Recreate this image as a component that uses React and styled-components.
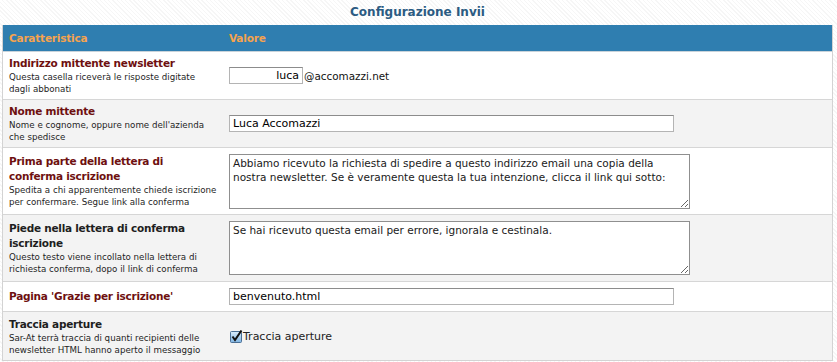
import React from 'react';
import styled, { createGlobalStyle } from 'styled-components';

const GlobalStyle = createGlobalStyle`
  html, body {
    margin: 0;
    padding: 0;
  }
  body {
    width: 837px;
    height: 362px;
    overflow: hidden;
    font-family: "DejaVu Sans", Verdana, sans-serif;
    background-color: #fdfdfd;
    background-image: repeating-linear-gradient(
      45deg,
      #ffffff 0px,
      #ffffff 2px,
      #f6f6f6 2px,
      #f6f6f6 3px
    );
  }
`;

const Page = styled.div`
  padding: 5px 4px 0 2px;
`;

const Title = styled.h1`
  margin: 0 0 6px;
  height: 14px;
  text-align: center;
  font-size: 12px;
  font-weight: bold;
  line-height: 14px;
  color: #2b5b82;
`;

const Table = styled.div`
  display: grid;
  grid-template-columns: 220px 1fr;
  width: 831px;
  border: 1px solid #d3d3d3;
  border-top: none;
  box-sizing: border-box;
`;

const Head = styled.div`
  background: #2f7eb0;
  height: 26px;
  padding: 0 6px;
  display: flex;
  align-items: center;
  font-size: 10.5px;
  letter-spacing: -0.2px;
  font-weight: bold;
  color: #f6a34e;
  border-bottom: 1px solid #c9d3da;
`;

const Cell = styled.div`
  background: ${p => (p.$alt ? '#f3f3f3' : '#ffffff')};
  height: ${p => p.$h}px;
  padding: 0 6px;
  display: flex;
  flex-direction: column;
  justify-content: center;
  border-bottom: ${p => (p.$last ? 'none' : '1px solid #d6d6d6')};
  box-sizing: border-box;
`;

const ValueCell = styled(Cell)`
  flex-direction: row;
  align-items: center;
  justify-content: flex-start;
`;

const Label = styled.div`
  font-size: 10.5px;
  letter-spacing: -0.25px;
  font-weight: bold;
  line-height: 15px;
  color: ${p => (p.$dark ? '#1e1e1e' : '#6e1010')};
`;

const Hint = styled.div`
  font-size: 8.7px;
  line-height: 12px;
  color: #1e1e1e;
`;

const TextInput = styled.input`
  width: ${p => p.$w}px;
  height: 17px;
  box-sizing: border-box;
  border: 1px solid #b4b4b4;
  border-top-color: #8c8c8c;
  padding: 0 3px;
  font-family: "DejaVu Sans", Verdana, sans-serif;
  font-size: 11px;
  color: #000;
  text-align: ${p => p.$align || 'left'};
  background: #fff;
  margin: 0;
`;

const Area = styled.textarea`
  width: 461px;
  height: ${p => p.$h}px;
  box-sizing: border-box;
  border: 1px solid #8f8f8f;
  padding: 1px 3px;
  font-family: "DejaVu Sans", Verdana, sans-serif;
  font-size: 10.5px;
  line-height: 14px;
  color: #1a1a1a;
  margin: 0;
`;

const Suffix = styled.span`
  font-size: 10.4px;
  margin-left: 1px;
  color: #111;
`;

const CheckLabel = styled.label`
  display: flex;
  align-items: center;
  font-size: 11px;
  color: #222;
  gap: 1px;
`;

const CheckBox = styled.span`
  display: inline-block;
  width: 12px;
  height: 12px;
  margin-left: 1px;
`;

const CheckIcon = () => (
  <CheckBox>
    <svg width="13" height="13" viewBox="0 0 13 13">
      <defs>
        <linearGradient id="cb" x1="0" y1="0" x2="0" y2="1">
          <stop offset="0" stopColor="#d9ecfb" />
          <stop offset="1" stopColor="#7fb4e2" />
        </linearGradient>
      </defs>
      <rect x="0.5" y="1.5" width="11" height="11" rx="1" fill="url(#cb)" stroke="#4a6f95" />
      <path d="M2.5 6.5 L5 10 L11.5 0.5" fill="none" stroke="#111" strokeWidth="2" />
    </svg>
  </CheckBox>
);

const App = () => (
  <Page>
    <GlobalStyle />
    <Title>Configurazione Invii</Title>
    <Table>
      <Head>Caratteristica</Head>
      <Head>Valore</Head>

      <Cell $h={48}>
        <Label>Indirizzo mittente newsletter</Label>
        <Hint>Questa casella riceverà le risposte digitate<br />dagli abbonati</Hint>
      </Cell>
      <ValueCell $h={48}>
        <TextInput $w={74} $align="right" defaultValue="luca" />
        <Suffix>@accomazzi.net</Suffix>
      </ValueCell>

      <Cell $h={48} $alt>
        <Label>Nome mittente</Label>
        <Hint>Nome e cognome, oppure nome dell'azienda<br />che spedisce</Hint>
      </Cell>
      <ValueCell $h={48} $alt>
        <TextInput $w={445} defaultValue="Luca Accomazzi" />
      </ValueCell>

      <Cell $h={67}>
        <Label>Prima parte della lettera di<br />conferma iscrizione</Label>
        <Hint>Spedita a chi apparentemente chiede iscrizione<br />per confermare. Segue link alla conferma</Hint>
      </Cell>
      <ValueCell $h={67}>
        <Area
          $h={55}
          defaultValue="Abbiamo ricevuto la richiesta di spedire a questo indirizzo email una copia della nostra newsletter. Se è veramente questa la tua intenzione, clicca il link qui sotto:"
        />
      </ValueCell>

      <Cell $h={67} $alt>
        <Label $dark>Piede nella lettera di conferma<br />iscrizione</Label>
        <Hint>Questo testo viene incollato nella lettera di<br />richiesta conferma, dopo il link di conferma</Hint>
      </Cell>
      <ValueCell $h={67} $alt>
        <Area $h={54} defaultValue="Se hai ricevuto questa email per errore, ignorala e cestinala." />
      </ValueCell>

      <Cell $h={30}>
        <Label>Pagina 'Grazie per iscrizione'</Label>
      </Cell>
      <ValueCell $h={30}>
        <TextInput $w={445} defaultValue="benvenuto.html" />
      </ValueCell>

      <Cell $h={48} $alt $last>
        <Label $dark>Traccia aperture</Label>
        <Hint>Sar-At terrà traccia di quanti recipienti delle<br />newsletter HTML hanno aperto il messaggio</Hint>
      </Cell>
      <ValueCell $h={48} $alt $last>
        <CheckLabel>
          <CheckIcon />
          Traccia aperture
        </CheckLabel>
      </ValueCell>
    </Table>
  </Page>
);

export default App;
